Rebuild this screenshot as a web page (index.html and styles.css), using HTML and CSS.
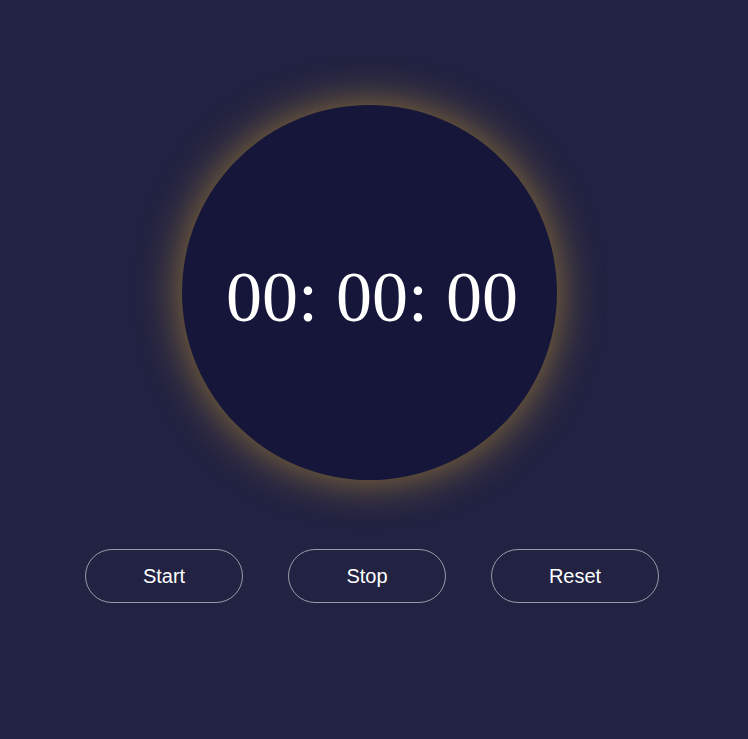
FILE: index.html
```html
<!DOCTYPE html>
<html lang="en">
<head>
<meta charset="utf-8">
<title>Stopwatch</title>
<link rel="stylesheet" href="styles.css">
</head>
<body>
<main class="app">
  <div class="dial">
    <div class="time">00: 00: 00</div>
  </div>
  <div class="controls">
    <button class="btn btn-start">Start</button>
    <button class="btn btn-stop">Stop</button>
    <button class="btn btn-reset">Reset</button>
  </div>
</main>
</body>
</html>
```
FILE: styles.css
```css
html, body {
  margin: 0;
  padding: 0;
  background: #222342;
  height: 100%;
}
.app {
  display: flex;
  flex-direction: column;
  align-items: flex-start;
}
.dial {
  margin-top: 105px;
  margin-left: 182px;
  width: 375px;
  height: 375px;
  border-radius: 50%;
  background: #15163a;
  box-shadow: 0 0 40px 2px rgba(225, 170, 45, 0.55);
  display: flex;
  align-items: center;
  justify-content: center;
}
.time {
  font-family: "Liberation Serif", "Times New Roman", serif;
  font-size: 72px;
  color: #ffffff;
  line-height: 1;
  margin-top: 8px;
  margin-left: 5px;
}
.controls {
  margin-top: 69px;
  margin-left: 85px;
  display: flex;
  gap: 45px;
}
.btn {
  height: 54px;
  width: 158px;
  border: 1px solid #9a9aa8;
  border-radius: 27px;
  background: transparent;
  color: #ffffff;
  font-family: "Liberation Sans", Arial, sans-serif;
  font-size: 20px;
  padding: 0;
  box-sizing: border-box;
}
.btn-reset {
  width: 168px;
}
```
